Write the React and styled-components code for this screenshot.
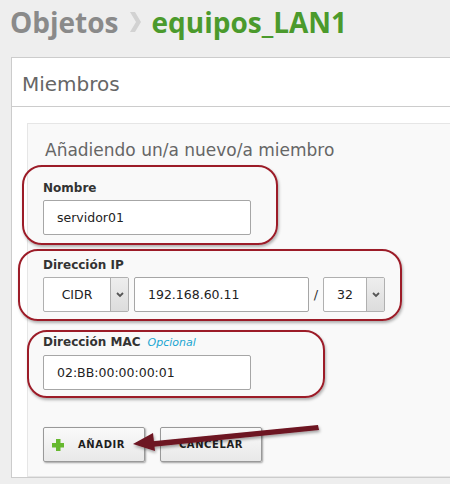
import styled, { createGlobalStyle } from "styled-components";

const GlobalStyle = createGlobalStyle`
  html, body {
    margin: 0;
    padding: 0;
    background: #eeeeee;
    overflow: hidden;
  }
  body {
    font-family: "DejaVu Sans", Verdana, sans-serif;
  }
`;

const Page = styled.div`
  position: relative;
  width: 450px;
  height: 484px;
  overflow: hidden;
`;

const Title = styled.h1`
  margin: 0;
  padding: 3px 0 0 10px;
  height: 38px;
  display: flex;
  align-items: center;
  gap: 11px;
  font-family: "Open Sans", sans-serif;
  font-size: 28px;
  font-weight: 700;
  line-height: 38px;
  color: #8a8a8a;
  white-space: nowrap;
`;

const Current = styled.span`
  color: #4b9a2c;
`;

const Panel = styled.section`
  margin: 16px 0 0 11px;
  width: 480px;
  background: #ffffff;
  border: 1px solid #cccccc;
`;

const PanelHeader = styled.div`
  height: 49px;
  box-sizing: border-box;
  padding: 14px 10px 11px;
  border-bottom: 1px solid #cccccc;
  font-size: 20px;
  line-height: 24px;
  color: #666666;
`;

const PanelBody = styled.div`
  padding: 16px 0 0 15px;
`;

const FormBox = styled.div`
  background: #f9f9f9;
  border: 1px solid #e6e6e6;
  padding: 16px 15px 14px;
  display: flex;
  flex-direction: column;
  align-items: flex-start;
`;

const FormTitle = styled.h2`
  margin: 0 0 20px 2px;
  font-size: 17px;
  font-weight: 400;
  line-height: 20px;
  color: #666666;
`;

const Group = styled.div`
  position: relative;
  display: flex;
  flex-direction: column;
  gap: 4px;
  margin-bottom: ${(p) => p.$mb}px;

  &::after {
    content: "";
    position: absolute;
    top: ${(p) => p.$o[0]}px;
    right: ${(p) => p.$o[1]}px;
    bottom: ${(p) => p.$o[2]}px;
    left: ${(p) => p.$o[3]}px;
    border: 2px solid #9c1c28;
    border-radius: 20px;
    box-shadow: 1px 2px 3px rgba(0, 0, 0, 0.3);
    pointer-events: none;
  }
`;

const Label = styled.label`
  font-size: 12px;
  font-weight: 700;
  line-height: 16px;
  color: #333333;
  white-space: nowrap;
`;

const Hint = styled.span`
  margin-left: 7px;
  font-size: 11px;
  font-weight: 400;
  font-style: italic;
  color: #1aa6d1;
`;

const Input = styled.div`
  box-sizing: border-box;
  width: ${(p) => p.$w}px;
  height: 35px;
  display: flex;
  align-items: center;
  padding-left: 13px;
  background: #ffffff;
  border: 1px solid #a6a6a6;
  border-radius: 2px;
  font-size: 12.5px;
  color: #222222;
`;

const Row = styled.div`
  display: flex;
  align-items: center;
`;

const Select = styled.div`
  box-sizing: border-box;
  width: ${(p) => p.$w}px;
  height: 35px;
  display: flex;
  background: #ffffff;
  border: 1px solid #b0b0b0;
  border-radius: 2px;
  margin-right: ${(p) => p.$mr || 0}px;
  font-size: 12.5px;
  color: #222222;
`;

const SelectValue = styled.span`
  flex: 1;
  display: flex;
  align-items: center;
  justify-content: center;
`;

const SelectArrow = styled.span`
  width: 17px;
  display: flex;
  align-items: center;
  justify-content: center;
  border-left: 1px solid #b0b0b0;
  background: linear-gradient(#eeeeee, #dcdcdc);
`;

const Slash = styled.span`
  width: 14px;
  text-align: center;
  font-size: 13px;
  color: #333333;
`;

const Buttons = styled.div`
  display: flex;
  gap: 15px;
`;

const Button = styled.button`
  box-sizing: border-box;
  width: 102px;
  height: 35px;
  display: flex;
  align-items: center;
  justify-content: ${(p) => (p.$icon ? "flex-start" : "center")};
  gap: 14px;
  padding: 0 0 0 ${(p) => (p.$icon ? 8 : 0)}px;
  border: 1px solid #999999;
  border-radius: 2px;
  background: linear-gradient(#fafafa, #e8e8e8);
  box-shadow: 1px 1px 2px rgba(0, 0, 0, 0.35);
  font-family: "DejaVu Sans", Verdana, sans-serif;
  font-size: 10px;
  font-weight: 700;
  letter-spacing: 0.6px;
  color: #1e1e1e;
`;

const Overlay = styled.svg`
  position: absolute;
  left: 0;
  top: 0;
  pointer-events: none;
`;

const Chevron = () => (
  <svg width="11" height="20" viewBox="0 0 11 20">
    <polygon points="0,0 5,0 11,10 5,20 0,20 6,10" fill="#d2d2d2" />
  </svg>
);

const Caret = () => (
  <svg width="8" height="6" viewBox="0 0 8 6">
    <polyline points="1,1 4,4 7,1" fill="none" stroke="#555" strokeWidth="1.8" />
  </svg>
);

const Plus = () => (
  <svg width="12" height="12" viewBox="0 0 12 12">
    <rect x="4" y="0" width="4.5" height="12" fill="#66b82f" />
    <rect x="0" y="4" width="12" height="4.5" fill="#66b82f" />
  </svg>
);

const App = () => {
  return (
    <Page>
      <GlobalStyle />
      <Title>
        Objetos <Chevron /> <Current>equipos_LAN1</Current>
      </Title>
      <Panel>
        <PanelHeader>Miembros</PanelHeader>
        <PanelBody>
          <FormBox>
            <FormTitle>Añadiendo un/a nuevo/a miembro</FormTitle>

            <Group $mb={22} $o={[-15, -27, -10, -21]}>
              <Label>Nombre</Label>
              <Input $w={208}>servidor01</Input>
            </Group>

            <Group $mb={22} $o={[-8, -17, -9, -25]}>
              <Label>Dirección IP</Label>
              <Row>
                <Select $w={86} $mr={5}>
                  <SelectValue>CIDR</SelectValue>
                  <SelectArrow>
                    <Caret />
                  </SelectArrow>
                </Select>
                <Input $w={175}>192.168.60.11</Input>
                <Slash>/</Slash>
                <Select $w={62}>
                  <SelectValue>32</SelectValue>
                  <SelectArrow>
                    <Caret />
                  </SelectArrow>
                </Select>
              </Row>
            </Group>

            <Group $mb={37} $o={[-4, -74, -8, -16]}>
              <Label>
                Dirección MAC<Hint>Opcional</Hint>
              </Label>
              <Input $w={208}>02:BB:00:00:00:01</Input>
            </Group>

            <Buttons>
              <Button $icon>
                <Plus />
                AÑADIR
              </Button>
              <Button>CANCELAR</Button>
            </Buttons>
          </FormBox>
        </PanelBody>
      </Panel>

      <Overlay width="450" height="484" viewBox="0 0 450 484">
        <defs>
          <filter id="sh" x="-10%" y="-50%" width="120%" height="200%">
            <feDropShadow dx="1" dy="2" stdDeviation="1.5" floodOpacity="0.35" />
          </filter>
        </defs>
        <g filter="url(#sh)" fill="#6d1320">
          <polygon points="150,441.5 318,425 319,430 151,447" />
          <polygon points="133,444 153,433 155,451" />
        </g>
      </Overlay>
    </Page>
  );
};

export default App;
